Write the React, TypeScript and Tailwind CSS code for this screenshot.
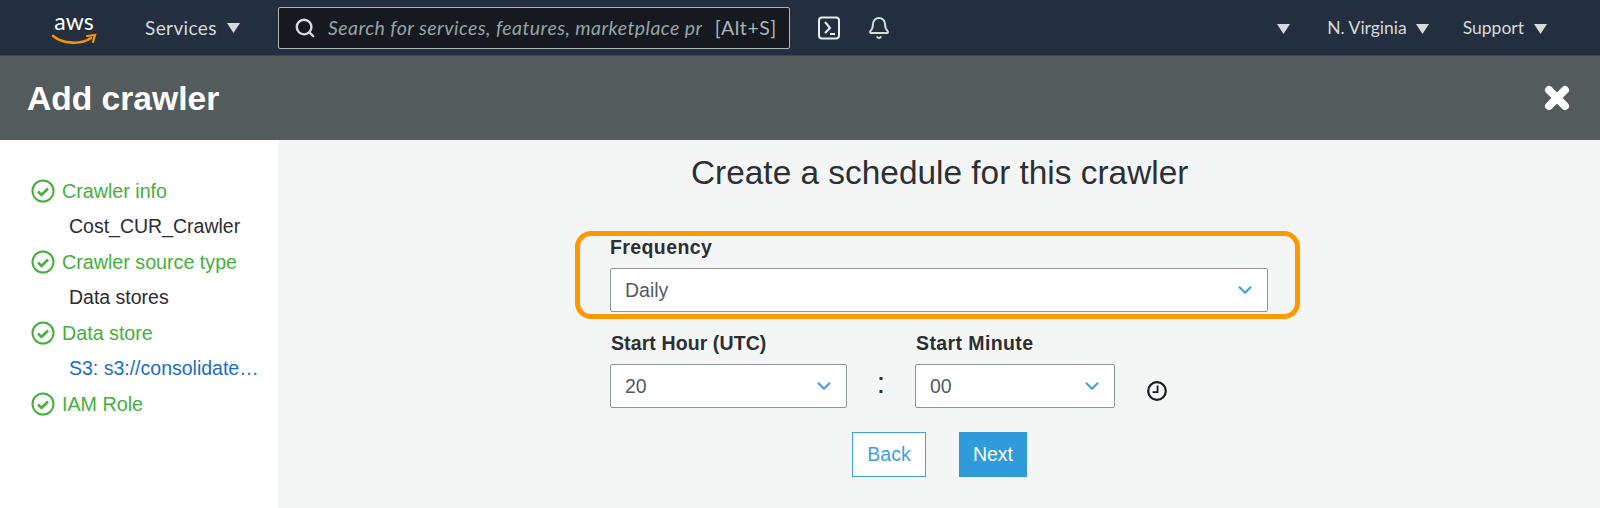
import { ChevronDown, X, Search, Bell } from "lucide-react";

const navFont = "font-['Lato',sans-serif]";

function Caret({ className = "" }: { className?: string }) {
  return (
    <svg width="15" height="12" viewBox="0 0 15 12" className={className}>
      <path d="M1 1 L14 1 L7.5 11 Z" fill="#d5dbdb" />
    </svg>
  );
}

function AwsLogo() {
  return (
    <div className="relative flex h-[42px] w-[46px] flex-col items-center">
      <span className="font-['Lato',sans-serif] text-[23px] leading-[26px] text-white">aws</span>
      <svg width="46" height="14" viewBox="0 0 46 14" className="-mt-[1px]">
        <path d="M2 3 C12 11 30 12 40 5" fill="none" stroke="#f79400" strokeWidth="2.6" strokeLinecap="round" />
        <path d="M36 3 L44 2 L42 9" fill="none" stroke="#f79400" strokeWidth="2.2" strokeLinecap="round" />
      </svg>
    </div>
  );
}

function CheckCircle() {
  return (
    <svg width="24" height="24" viewBox="0 0 24 24" className="shrink-0">
      <circle cx="12" cy="12" r="10.5" fill="none" stroke="#44b03c" strokeWidth="2" />
      <path d="M7 12.5 L10.5 16 L17 9.5" fill="none" stroke="#44b03c" strokeWidth="2.6" />
    </svg>
  );
}

function Step({ title, detail, link }: { title: string; detail?: string; link?: boolean }) {
  return (
    <div>
      <div className="flex h-[36px] items-center gap-[7px] pl-[31px]">
        <CheckCircle />
        <span className="pt-[1px] text-[19.7px] text-[#44b03c]">{title}</span>
      </div>
      {detail && (
        <div className={`flex h-[35px] items-center whitespace-nowrap pl-[69px] text-[19.5px] ${link ? "text-[#1a6ec8]" : "text-[#2c2c33]"}`}>
          {detail}
        </div>
      )}
    </div>
  );
}

function SelectBox({ value, className }: { value: string; className: string }) {
  return (
    <div className={`flex h-[44px] items-center justify-between rounded-[2px] border border-[#8f9696] bg-white pl-[14px] pr-[11px] text-[19.5px] text-[#545b64] ${className}`}>
      <span className="pt-[1px]">{value}</span>
      <ChevronDown size={22} strokeWidth={2.2} className="text-[#3f9fdc]" />
    </div>
  );
}

export default function App() {
  return (
    <div className="flex h-[508px] w-[1600px] flex-col overflow-hidden font-['Liberation_Sans',sans-serif]">
      <nav className={`flex h-[56px] shrink-0 items-center border-b border-[#3a4654] bg-[#232f3e] ${navFont}`}>
        <div className="ml-[51px] mt-[2px]">
          <AwsLogo />
        </div>
        <div className="ml-[48px] flex items-center gap-[9px] pt-[1px] text-[19px] tracking-[0.4px] text-[#d5dbdb]">
          Services
          <Caret />
        </div>
        <div className="ml-[37px] flex h-[42px] w-[512px] shrink-0 items-center rounded-[2px] border border-[#aab7b8] bg-[#16191f] pl-[15px] pr-[12px]">
          <Search size={22} strokeWidth={2.6} className="shrink-0 text-[#d5dbdb]" />
          <span className="ml-[12px] w-[374px] shrink-0 overflow-hidden whitespace-nowrap text-[19.5px] tracking-[0.45px] italic text-[#95a5a6]">
            Search for services, features, marketplace products, and docs
          </span>
          <span className="ml-auto shrink-0 text-[19.5px] tracking-[0.6px] text-[#aab7b8]">[Alt+S]</span>
        </div>
        <svg width="24" height="24" viewBox="0 0 24 24" className="ml-[27px] shrink-0">
          <rect x="2" y="1.5" width="20" height="21" rx="3" fill="none" stroke="#eaeded" strokeWidth="2" />
          <path d="M8 6 L13 12 L8 17 M13 18 H18" fill="none" stroke="#eaeded" strokeWidth="2" />
        </svg>
        <Bell size={24} strokeWidth={2} className="ml-[26px] shrink-0 text-[#d5dbdb]" />
        <div className="ml-auto flex items-center pt-[2px] text-[17.5px] text-[#d5dbdb]">
          <Caret />
          <span className="ml-[36px]">N. Virginia</span>
          <Caret className="ml-[8px]" />
          <span className="ml-[33px]">Support</span>
          <Caret className="ml-[9px] mr-[52px]" />
        </div>
      </nav>

      <header className="flex h-[84px] shrink-0 items-center justify-between bg-[#545b5c] pl-[27px] pr-[27px]">
        <h1 className="mt-[2px] text-[33.6px] font-bold text-white">Add crawler</h1>
        <X size={32} strokeWidth={6} className="text-white" />
      </header>

      <div className="flex min-h-0 grow">
        <aside className="w-[278px] shrink-0 bg-white pt-[33px]">
          <Step title="Crawler info" detail="Cost_CUR_Crawler" />
          <Step title="Crawler source type" detail="Data stores" />
          <Step title="Data store" detail="S3: s3://consolidate…" link />
          <Step title="IAM Role" />
        </aside>

        <main className="relative grow bg-[#f4f6f6]">
          <h2 className="mt-[11px] pl-[413px] text-[33.4px] leading-[44px] text-[#2c3033]">
            Create a schedule for this crawler
          </h2>
          <div className="ml-[332px] mt-[40px] w-[660px]">
            <label className="block text-[19.5px] font-bold leading-[24px] tracking-[0.4px] text-[#2b2f33]">Frequency</label>
            <SelectBox value="Daily" className="mt-[9px] w-[658px]" />
            <div className="mt-[19px] flex items-start">
              <div className="w-[237px]">
                <label className="block pl-[1px] text-[19.5px] font-bold leading-[24px] tracking-[0.1px] text-[#2b2f33]">Start Hour (UTC)</label>
                <SelectBox value="20" className="mt-[9px] w-[237px]" />
              </div>
              <div className="mt-[30px] w-[68px] text-center text-[30px] leading-[44px] text-[#2b2f33]">:</div>
              <div className="w-[200px]">
                <label className="block pl-[1px] text-[19.5px] font-bold leading-[24px] tracking-[0.4px] text-[#2b2f33]">Start Minute</label>
                <SelectBox value="00" className="mt-[9px] w-[200px]" />
              </div>
              <svg width="22" height="22" viewBox="0 0 20 20" className="ml-[31px] mt-[49px] shrink-0">
                <circle cx="10" cy="10" r="8" fill="none" stroke="#16191f" strokeWidth="2" />
                <path d="M10.5 5 V11 H6" fill="none" stroke="#16191f" strokeWidth="1.6" />
              </svg>
            </div>
          </div>
          <div className="ml-[574px] mt-[24px] flex gap-[33px]">
            <button className="h-[45px] w-[74px] border border-[#3f9fdc] bg-white text-[19.5px] text-[#3f9fdc]">Back</button>
            <button className="h-[45px] w-[68px] bg-[#2f9bdb] text-[19.5px] text-white">Next</button>
          </div>
          {/* annotation drawn over the form */}
          <div className="absolute left-[297px] top-[91px] h-[88px] w-[725px] rounded-[16px] border-[5px] border-[#ff9900]" />
        </main>
      </div>
    </div>
  );
}
